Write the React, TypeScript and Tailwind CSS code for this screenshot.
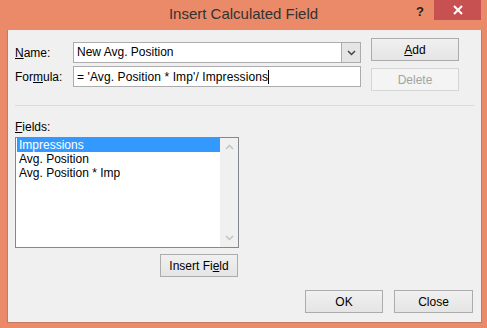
const btn =
  'flex items-center justify-center border border-[#acacac] bg-gradient-to-b from-[#f0f0f0] to-[#e5e5e5] text-[12px] text-black';

function Chevron({ up, color }: { up?: boolean; color: string }) {
  return (
    <svg width="9" height="6" viewBox="0 0 9 6">
      <polyline
        points={up ? '1,5 4.5,1.5 8,5' : '1,1 4.5,4.5 8,1'}
        fill="none"
        stroke={color}
        strokeWidth="1.5"
      />
    </svg>
  );
}

export default function App() {
  const fields = ['Impressions', 'Avg. Position', 'Avg. Position * Imp'];

  return (
    <div className="w-[487px] h-[328px] bg-[#ea8a68] font-['Liberation_Sans',Arial,sans-serif] text-[12px] text-black overflow-hidden">
      {/* title bar */}
      <div className="relative h-[30px]">
        <div className="flex justify-center pt-[5px] text-[15px] leading-[17px] text-[#333333]">
          Insert Calculated Field
        </div>
        <div className="absolute left-[416px] top-[2px] text-[13px] font-bold text-[#222222]">?</div>
        <div className="absolute right-[6px] top-0 w-[47px] h-[20px] bg-[#c75050] flex items-center justify-center">
          <svg width="10" height="10" viewBox="0 0 10 10">
            <path d="M1 1 L9 9 M9 1 L1 9" stroke="#ffffff" strokeWidth="2" />
          </svg>
        </div>
      </div>

      {/* client area */}
      <div className="ml-[7px] w-[475px] h-[293px] border-l border-r border-b border-[#c27a60] bg-[#f0f0f0]">
        <div className="flex pt-[8px] pl-[7px]">
          <div className="flex flex-col pt-[4px] gap-[3px] w-[346px]">
            <div className="flex items-center h-[21px]">
              <div className="w-[58px]">
                <u>N</u>ame:
              </div>
              <div className="flex w-[288px] h-[21px] border border-[#acacac] bg-white">
                <div className="flex-1 pl-[3px] leading-[19px]">New Avg. Position</div>
                <div className="w-[19px] h-[19px] border-l border-[#acacac] bg-[#e5e5e5] flex items-center justify-center">
                  <Chevron color="#444444" />
                </div>
              </div>
            </div>
            <div className="flex items-center h-[21px]">
              <div className="w-[58px]">
                For<u>m</u>ula:
              </div>
              <div className="flex items-center w-[288px] h-[21px] border border-[#acacac] bg-white pl-[3px]">
                <span className="tracking-[0.1px]">= 'Avg. Position * Imp'/ Impressions</span>
                <span className="w-[1px] h-[14px] bg-black" />
              </div>
            </div>
          </div>
          <div className="ml-[10px] flex flex-col gap-[7px]">
            <div className={`${btn} w-[88px] h-[23px] border-[#5fa2de] from-[#eef4fa] to-[#e3eaf2]`}>
              <span>
                <u>A</u>dd
              </span>
            </div>
            <div className="flex items-center justify-center w-[88px] h-[23px] border border-[#d5d5d5] bg-[#f4f4f4] text-[#a3a3a3]">
              Delete
            </div>
          </div>
        </div>

        <div className="mt-[14px] mx-[7px] h-[1px] bg-[#dadada]" />

        <div className="mt-[14px] pl-[7px] leading-[14px]">
          <u>F</u>ields:
        </div>

        <div className="mt-[3px] ml-[7px] flex w-[224px] h-[111px] border border-[#828790] bg-white">
          <div className="flex-1 pl-[1px]">
            {fields.map((f, i) => (
              <div
                key={f}
                className={`h-[14px] leading-[14px] pl-[2px] ${i === 0 ? 'bg-[#3399ff] text-white' : ''}`}
              >
                {f}
              </div>
            ))}
          </div>
          <div className="w-[18px] bg-[#f0f0f0] flex flex-col items-center justify-between py-[6px]">
            <Chevron up color="#c2c2c2" />
            <Chevron color="#c2c2c2" />
          </div>
        </div>

        <div className={`${btn} mt-[6px] ml-[152px] w-[78px] h-[23px]`}>
          <span>
            Insert Fi<u>e</u>ld
          </span>
        </div>

        <div className="mt-[13px] pr-[8px] flex justify-end gap-[11px]">
          <div className={`${btn} w-[78px] h-[23px]`}>OK</div>
          <div className={`${btn} w-[79px] h-[23px]`}>Close</div>
        </div>
      </div>
    </div>
  );
}
